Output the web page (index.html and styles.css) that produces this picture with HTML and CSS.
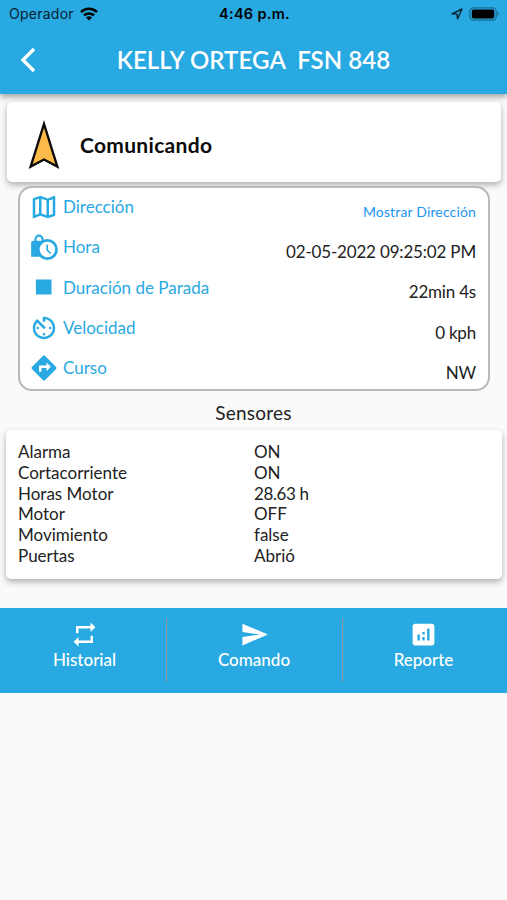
FILE: index.html
```html
<!DOCTYPE html>
<html lang="es">

<head>
  <meta charset="UTF-8">
  <meta name="viewport" content="width=device-width, initial-scale=1.0">
  <title>KELLY ORTEGA FSN 848</title>
  <link rel="stylesheet" href="styles.css">
</head>

<body>
  <header class="header">
    <div class="status-bar">
      <div class="carrier">
        <span>Operador</span>
        <svg class="wifi" viewBox="0 0 18 14" fill="none" stroke="#000" stroke-width="2.5">
          <path d="M1 5.1a11.5 11.5 0 0 1 16 0M4 8.4a7.2 7.2 0 0 1 10 0" />
          <path d="M9 13.6L6 10.6a4.3 4.3 0 0 1 6 0z" fill="#000" stroke="none" />
        </svg>
      </div>
      <span class="clock">4:46 p.m.</span>
      <div class="indicators">
        <svg class="location" viewBox="0 0 12 12" fill="none" stroke="#06222f" stroke-width="1.4" stroke-linejoin="round">
          <path d="M1 5.8L11 1 6.6 10.8 6 6.1z" />
        </svg>
        <svg class="battery" viewBox="0 0 31 14">
          <rect x=".8" y=".8" width="26.4" height="12.4" rx="3.6" fill="none" stroke="#1a6c91" stroke-width="1.3" />
          <rect x="2.8" y="2.6" width="22.4" height="8.8" rx="2" fill="#000" />
          <path d="M28.6 5v4c1.9-.7 1.9-3.3 0-4z" fill="#1a6c91" />
        </svg>
      </div>
    </div>
    <div class="title-bar">
      <svg class="back" viewBox="0 0 16 26" fill="none" stroke="#fff" stroke-width="3.4">
        <path d="M14 2L3 13l11 11" />
      </svg>
      <h1>KELLY ORTEGA&nbsp; FSN 848</h1>
    </div>
  </header>

  <main>
    <section class="card status-card">
      <svg class="arrow" viewBox="0 0 34 50">
        <path d="M17 4L30.3 46.5 17 39.5 3.7 46.5z" fill="#fdba4b" stroke="#0b0b0b" stroke-width="2.4" />
      </svg>
      <strong>Comunicando</strong>
    </section>

    <section class="details">
      <div class="row">
        <svg class="icon" viewBox="0 0 24 24"><path d="M20.5 3l-.16.03L15 5.1 9 3 3.36 4.9c-.21.07-.36.25-.36.48V20.5c0 .28.22.5.5.5l.16-.03L9 18.9l6 2.1 5.64-1.9c.21-.07.36-.25.36-.48V3.5c0-.28-.22-.5-.5-.5zM10 5.47l4 1.4v11.66l-4-1.4V5.47zm-5 .99l3-1.01v11.7l-3 1.16V6.46zm14 11.08l-3 1.01V6.86l3-1.16v11.84z" /></svg>
        <span class="label">Dirección</span>
        <a class="value link">Mostrar Dirección</a>
      </div>
      <div class="row">
        <svg class="icon" viewBox="0 0 24 24">
          <path d="M5.2 8V5.700a2.800 2.800 0 0 1 5.600 0V8" fill="none" stroke="#29a9e1" stroke-width="1.700" />
          <path d="M3.5 7H12V19.800H1.700V8.800A1.800 1.800 0 0 1 3.500 7z" />
          <circle cx="14.700" cy="14" r="8.400" />
          <circle cx="14.700" cy="14" r="7" fill="#fff" stroke="#29a9e1" stroke-width="1.600" />
          <path d="M14.500 10v4.400l2.800 2.800" fill="none" stroke="#29a9e1" stroke-width="1.300" />
        </svg>
        <span class="label">Hora</span>
        <span class="value date">02-05-2022 09:25:02 PM</span>
      </div>
      <div class="row">
        <svg class="icon" viewBox="0 0 24 24"><path d="M5.5 6h12.5v12H5.5z" /></svg>
        <span class="label">Duración de Parada</span>
        <span class="value">22min 4s</span>
      </div>
      <div class="row">
        <svg class="icon" viewBox="0 0 24 24"><path d="M11 17c0 .55.45 1 1 1s1-.45 1-1-.45-1-1-1-1 .45-1 1zm0-14v4h2V5.080c3.390.49 6 3.390 6 6.920 0 3.870-3.130 7-7 7s-7-3.130-7-7c0-1.680.59-3.220 1.580-4.420L12 13l1.410-1.410-6.800-6.800v.02C4.420 6.450 3 9.050 3 12c0 4.970 4.020 9 9 9 4.970 0 9-4.030 9-9s-4.030-9-9-9h-1zm7 9c0-.55-.45-1-1-1s-1 .45-1 1 .45 1 1 1 1-.45 1-1zM6 12c0 .55.45 1 1 1s1-.45 1-1-.45-1-1-1-1 .45-1 1z" /></svg>
        <span class="label">Velocidad</span>
        <span class="value">0 kph</span>
      </div>
      <div class="row">
        <svg class="icon" viewBox="0 0 24 24"><path d="M21.710 11.290l-9-9c-.39-.39-1.020-.39-1.410 0l-9 9c-.39.39-.39 1.020 0 1.410l9 9c.39.39 1.020.39 1.410 0l9-9c.39-.38.39-1.010 0-1.410zM14 14.500V12h-4v3H8v-4c0-.55.45-1 1-1h5V7.500l3.500 3.500-3.500 3.500z" /></svg>
        <span class="label">Curso</span>
        <span class="value">NW</span>
      </div>
    </section>

    <h2>Sensores</h2>

    <section class="card sensors">
      <span>Alarma</span><span>ON</span>
      <span>Cortacorriente</span><span>ON</span>
      <span>Horas Motor</span><span class="hours">28.63 h</span>
      <span>Motor</span><span>OFF</span>
      <span>Movimiento</span><span>false</span>
      <span>Puertas</span><span>Abrió</span>
    </section>
  </main>

  <nav class="actions">
    <a class="action">
      <svg viewBox="0 0 24 24"><path d="M7 7h10v3l4-4-4-4v3H5v6h2V7zm10 10H7v-3l-4 4 4 4v-3h12v-6h-2v4z" /></svg>
      <span>Historial</span>
    </a>
    <a class="action">
      <svg viewBox="0 0 24 24"><path d="M2.010 21L23 12 2.010 3 2 10l15 2-15 2z" /></svg>
      <span>Comando</span>
    </a>
    <a class="action">
      <svg viewBox="0 0 24 24"><path d="M19 3H5c-1.100 0-2 .9-2 2v14c0 1.100.9 2 2 2h14c1.100 0 2-.9 2-2V5c0-1.100-.9-2-2-2zM9 17H7v-5h2v5zm4 0h-2v-3h2v3zm0-5h-2v-2h2v2zm4 5h-2V7h2v10z" /></svg>
      <span>Reporte</span>
    </a>
  </nav>
</body>

</html>
```

FILE: styles.css
```css
* {
  box-sizing: border-box;
}

body {
  margin: 0;
  min-height: 100vh;
  background-color: #fafafa;
  color: #222;
  font-family: Lato, "Open Sans", sans-serif;
  font-size: 17px;
}

svg {
  display: block;
  flex: none;
}

.header {
  height: 94px;
  background-color: #29a9e1;
  box-shadow: 0 3px 6px rgba(0, 0, 0, .35);
}

.status-bar {
  display: grid;
  grid-template-columns: 1fr auto 1fr;
  align-items: center;
  height: 27px;
  padding: 0 7px 0 9px;
  color: #06222f;
  font-family: Inter, sans-serif;
  font-size: 14px;
}

.carrier {
  display: flex;
  align-items: center;
  gap: 6px;
  letter-spacing: .25px;
}

.wifi {
  width: 18px;
  height: 14px;
}

.clock {
  color: #000;
  font-weight: 600;
  font-size: 14.5px;
  letter-spacing: .3px;
}

.indicators {
  display: flex;
  justify-content: flex-end;
  align-items: center;
  gap: 6px;
}

.location {
  width: 12px;
  height: 12px;
}

.battery {
  width: 31px;
  height: 14px;
}

.title-bar {
  display: grid;
  grid-template-columns: 60px 1fr 60px;
  align-items: center;
  height: 66px;
  color: #fff;
}

.back {
  width: 16px;
  height: 26px;
  margin-left: 20px;
}

h1 {
  margin: 0 0 2px;
  font-size: 24px;
  font-weight: 600;
  letter-spacing: .08px;
  text-align: center;
  white-space: nowrap;
}

.card {
  background-color: #fff;
  border-radius: 5px;
  box-shadow: 0 3px 6px rgba(0, 0, 0, .3);
}

.status-card {
  display: flex;
  align-items: center;
  gap: 19px;
  height: 80px;
  margin: 8px 6px 0 7px;
  padding: 6px 20px 0;
}

.status-card strong {
  margin-bottom: 2px;
  color: #0b0b0b;
  font-size: 21px;
  letter-spacing: .3px;
}

.arrow {
  width: 34px;
  height: 50px;
}

.details {
  height: 205px;
  margin: 4px 17px 0 18px;
  padding: 0 12px 0 9px;
  background-color: #fff;
  border: 2px solid #b9b9b9;
  border-radius: 14px;
}

.row {
  display: flex;
  align-items: center;
  height: 40.3px;
}

.row:first-child {
  margin-top: -1.5px;
}

.icon {
  width: 30px;
  height: 30px;
  margin-right: 4px;
  fill: #29a9e1;
}

.label {
  color: #29a9e1;
}

.value {
  margin-left: auto;
  padding-top: 9px;
  letter-spacing: -.2px;
}

.date {
  letter-spacing: -.18px;
}

.link {
  color: #2196f3;
  font-size: 14px;
  letter-spacing: .15px;
}

h2 {
  margin: 10px 0 5px;
  font-size: 19px;
  font-weight: 400;
  letter-spacing: .25px;
  line-height: 24px;
  text-align: center;
}

.sensors {
  display: grid;
  grid-template-columns: 236px 1fr;
  height: 149px;
  margin: 0 5px 0 6px;
  padding: 12px;
  line-height: 20.8px;
}

.hours {
  letter-spacing: -.4px;
}

.actions {
  display: grid;
  grid-template-columns: 166px 176px 1fr;
  height: 85px;
  margin-top: 29px;
  padding: 10px 0 11px;
  background-color: #29a9e1;
}

.action {
  display: flex;
  flex-direction: column;
  align-items: center;
  padding: 2px 1px 0 0;
  color: #fff;
  font-weight: 500;
  line-height: 21px;
}

.action:first-child {
  padding: 2px 0 0 3px;
}

.action + .action {
  border-left: 1px solid #8c9ba4;
}

.action:last-child {
  padding-right: 3px;
}

.action svg {
  width: 29px;
  height: 29px;
  fill: #fff;
}
```
